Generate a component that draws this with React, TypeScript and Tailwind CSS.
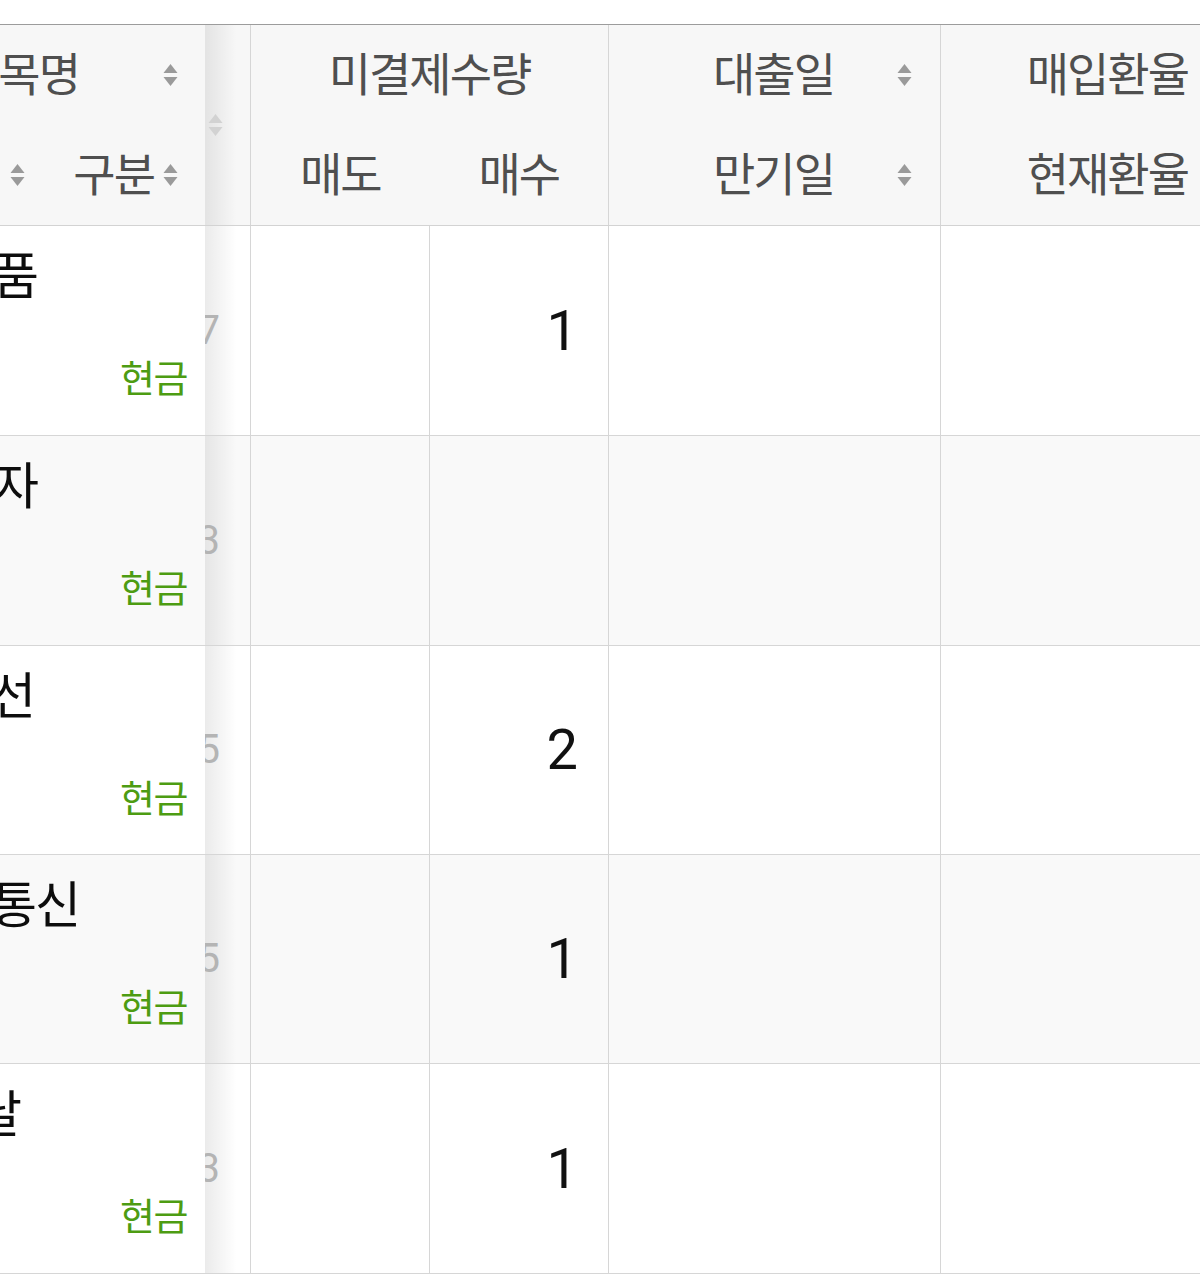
import React from 'react';

// Two stacked triangles used as the column sort toggle
function SortIcon({ className = 'text-[#9a9a9a]' }: { className?: string }) {
  return (
    <svg width="15" height="24" viewBox="0 0 15 24" fill="currentColor" className={`shrink-0 ${className}`}>
      <path d="M7.5 1 L14.5 10 H0.5 Z" />
      <path d="M0.5 14 H14.5 L7.5 23 Z" />
    </svg>
  );
}

interface Row {
  name: string;
  nameBox: string;
  qty: string;
  sell: string;
  buy: string;
  bg: string;
  h: string;
}

const rows: Row[] = [
  { name: '한국식품', nameBox: 'w-[37px]', qty: '127', sell: '', buy: '1', bg: 'bg-white', h: 'h-[210px]' },
  { name: '삼성전자', nameBox: 'w-[37px]', qty: '113', sell: '', buy: '', bg: 'bg-[#f9f9f9]', h: 'h-[210px]' },
  { name: '현대조선', nameBox: 'w-[34px]', qty: '245', sell: '', buy: '2', bg: 'bg-white', h: 'h-[209px]' },
  { name: '한국통신', nameBox: 'w-[79px]', qty: '95', sell: '', buy: '1', bg: 'bg-[#f9f9f9]', h: 'h-[209px]' },
  { name: '대한날', nameBox: 'w-[20px]', qty: '33', sell: '', buy: '1', bg: 'bg-white', h: 'h-[210px]' },
];

const head = 'text-[46px] tracking-[-2px] text-[#4f4f4f] whitespace-nowrap leading-none';

export default function App() {
  return (
    <div className="w-[1200px] h-[1277px] overflow-hidden bg-white pt-[24px] font-['Roboto','Noto_Sans_CJK_KR',sans-serif]">
      <div className="border-t border-[#9c9c9c]">
        {/* header */}
        <div className="flex h-[201px] bg-[#f7f7f7] border-b border-[#d3d3d3]">
          <div className="w-[205px] shrink-0 flex flex-col overflow-hidden">
            <div className="h-[100px] flex items-center pr-[27px]">
              <span className={`${head} ml-[-42px]`}>종목명</span>
              <SortIcon className="ml-auto text-[#9a9a9a]" />
            </div>
            <div className="h-[100px] flex items-center pl-[10px] pr-[27px]">
              <SortIcon />
              <span className={`${head} ml-auto mr-[9px]`}>구분</span>
              <SortIcon />
            </div>
          </div>
          <div className="w-[45px] shrink-0 flex items-center justify-end pr-[27px] bg-linear-to-r from-black/[0.08] to-transparent to-70%">
            <SortIcon className="text-[#d2d2d2]" />
          </div>
          <div className="w-[358px] shrink-0 border-l border-[#d6d6d6] flex flex-col">
            <div className="h-[100px] flex items-center justify-center">
              <span className={head}>미결제수량</span>
            </div>
            <div className="h-[100px] flex">
              <div className="flex-1 flex items-center justify-center">
                <span className={head}>매도</span>
              </div>
              <div className="flex-1 flex items-center justify-center">
                <span className={head}>매수</span>
              </div>
            </div>
          </div>
          <div className="w-[332px] shrink-0 border-l border-[#d6d6d6] flex flex-col pr-[28px]">
            <div className="h-[100px] flex items-center justify-end gap-[63px]">
              <span className={head}>대출일</span>
              <SortIcon />
            </div>
            <div className="h-[100px] flex items-center justify-end gap-[63px]">
              <span className={head}>만기일</span>
              <SortIcon />
            </div>
          </div>
          <div className="flex-1 border-l border-[#d6d6d6] flex flex-col pr-[12px]">
            <div className="h-[100px] flex items-center justify-end">
              <span className={head}>매입환율</span>
            </div>
            <div className="h-[100px] flex items-center justify-end">
              <span className={head}>현재환율</span>
            </div>
          </div>
        </div>

        {/* body rows */}
        {rows.map((r) => (
          <div key={r.name} className={`flex border-b border-[#d6d6d6] ${r.bg} ${r.h}`}>
            <div className="w-[205px] shrink-0 flex flex-col overflow-hidden pt-[19px] pr-[18px]">
              <div className={`flex justify-end ${r.nameBox}`}>
                <span className="text-[50px] leading-[64px] tracking-[-2px] text-[#0d0d0d] whitespace-nowrap">{r.name}</span>
              </div>
              <div className="mt-[48px] flex justify-end">
                <span className="text-[38px] leading-[44px] tracking-[-1.5px] text-[#4d9c12]">현금</span>
              </div>
            </div>
            <div className="w-[45px] shrink-0 flex items-center justify-end overflow-hidden pr-[30px] bg-linear-to-r from-black/[0.08] to-transparent to-70%">
              <span className="text-[40px] text-[#b4b4b4] whitespace-nowrap">{r.qty}</span>
            </div>
            <div className="w-[179px] shrink-0 border-l border-[#d6d6d6] flex items-center justify-end pr-[30px]">
              <span className="text-[56px] text-[#111]">{r.sell}</span>
            </div>
            <div className="w-[179px] shrink-0 border-l border-[#d6d6d6] flex items-center justify-end pr-[30px]">
              <span className="text-[56px] text-[#111]">{r.buy}</span>
            </div>
            <div className="w-[332px] shrink-0 border-l border-[#d6d6d6]" />
            <div className="flex-1 border-l border-[#d6d6d6]" />
          </div>
        ))}
      </div>
    </div>
  );
}
